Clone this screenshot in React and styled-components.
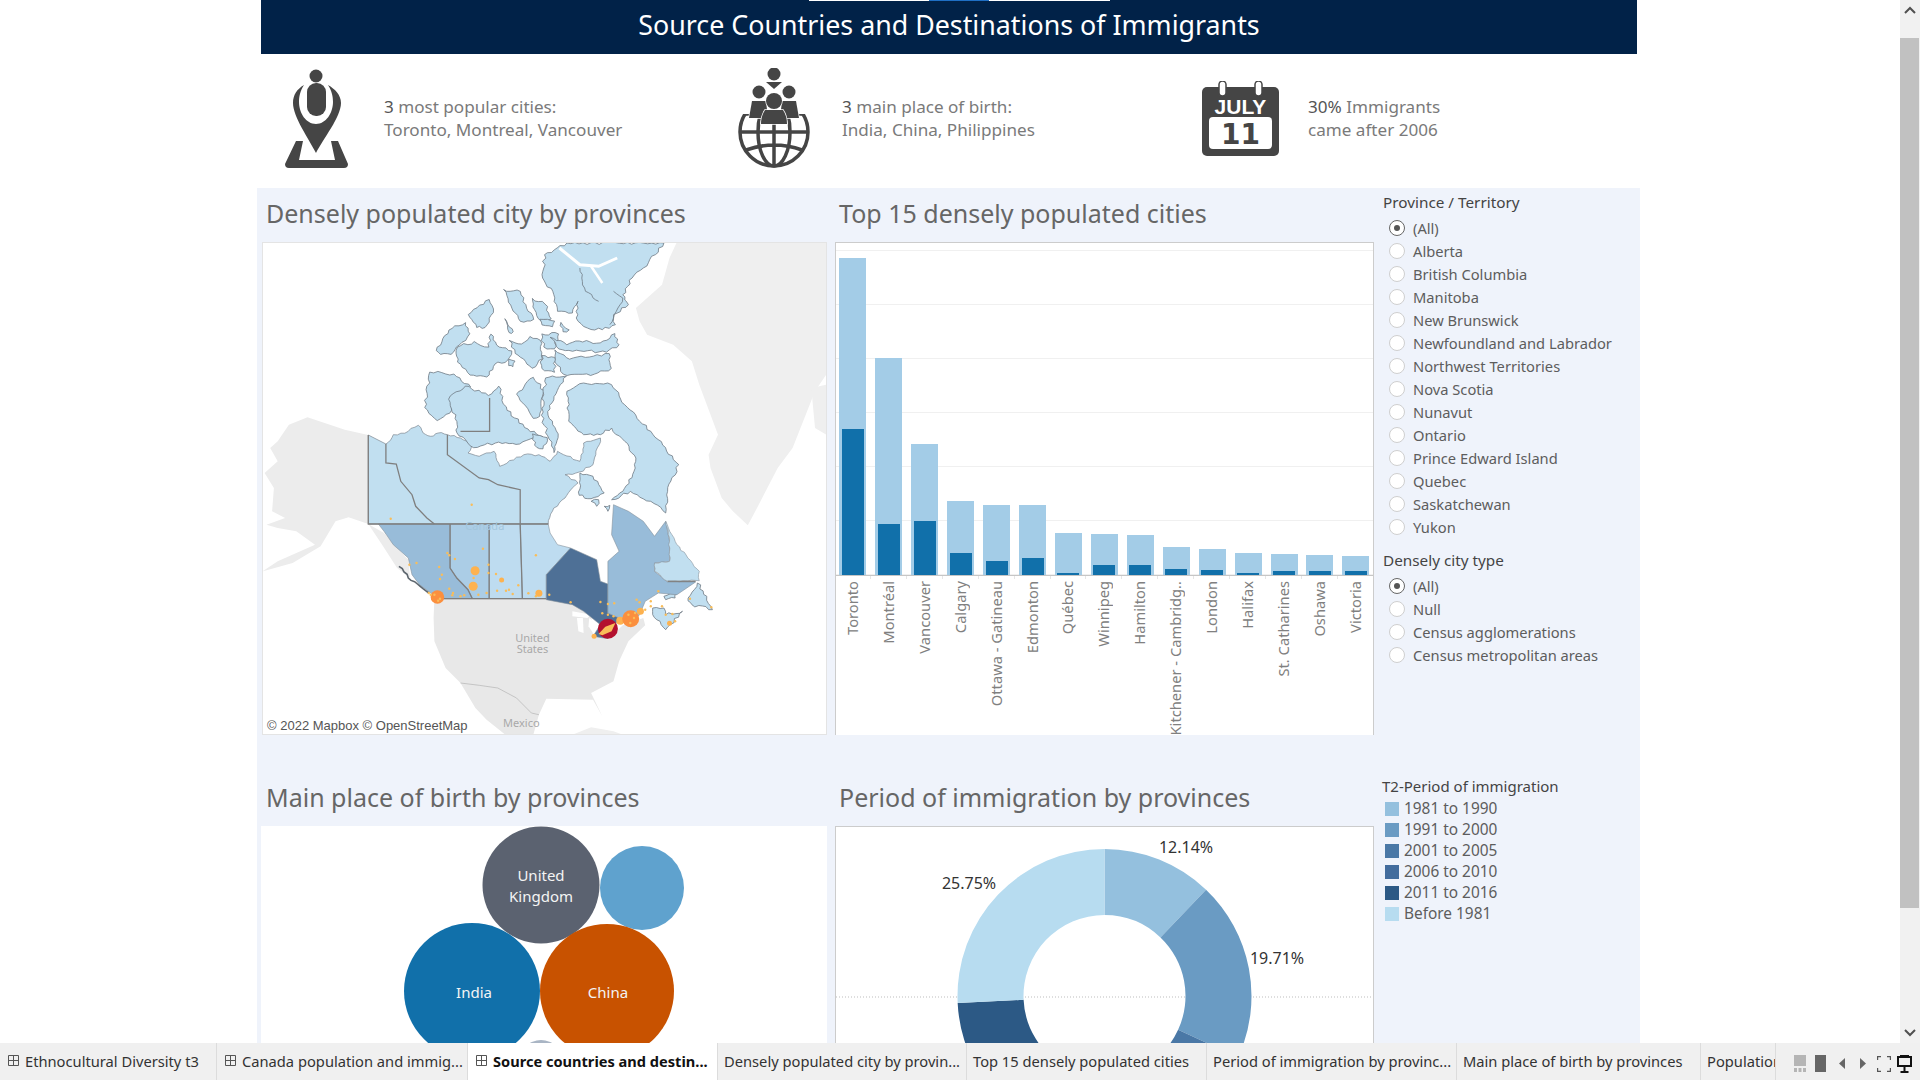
import React from 'react';
import styled, { createGlobalStyle } from 'styled-components';

const FONT = '"Noto Sans", "Open Sans", sans-serif';

const GlobalStyle = createGlobalStyle`
  html, body { margin: 0; padding: 0; background: #fff; overflow: hidden; }
  body { font-family: ${FONT}; }
`;

// map coordinates are traced from a 2.68x / 3x crop of the map card
const mx = (x) => ((x - 18) / 2.68).toFixed(1);
const my = (y) => ((y - 22) / 3).toFixed(1);
const pts = (arr) => arr.map(([x, y]) => `${mx(x)},${my(y)}`).join(' ');

const noise = (k) => {
  const v = Math.sin(k * 12.9898) * 43758.5453;
  return v - Math.floor(v) - 0.5;
};

// breaks straight edges into a jagged coastline
const rough = (arr, amp = 9, closed = true) => {
  const out = [];
  const edges = closed ? arr.length : arr.length - 1;
  for (let i = 0; i < edges; i++) {
    const [x, y] = arr[i];
    const [nx, ny] = arr[(i + 1) % arr.length];
    const len = Math.hypot(nx - x, ny - y);
    const steps = Math.max(1, Math.ceil(len / 11));
    for (let s = 0; s < steps; s++) {
      const t = s / steps;
      const o = s === 0 ? 0 : noise(x * 3 + y + s) * amp;
      out.push([x + (nx - x) * t + (-(ny - y) / len) * o, y + (ny - y) * t + ((nx - x) / len) * o]);
    }
  }
  if (!closed) out.push(arr[arr.length - 1]);
  return out;
};

// widens an island a little around its own centre
const grow = (arr, k = 1.12) => {
  const cx = arr.reduce((s, p) => s + p[0], 0) / arr.length;
  const cy = arr.reduce((s, p) => s + p[1], 0) / arr.length;
  return arr.map(([x, y]) => [cx + (x - cx) * k, cy + (y - cy) * k]);
};

const LAND = [
  { fill: '#ececec', points: [[303, 601], [240, 585], [140, 548], [90, 570], [60, 620], [40, 640], [60, 680], [25, 715], [50, 760], [45, 830], [80, 850], [30, 870], [60, 880], [110, 890], [160, 930], [60, 980], [20, 1010], [100, 985], [175, 935], [215, 860], [250, 848], [303, 868], [345, 895], [375, 935], [410, 975], [415, 1030], [380, 1000], [340, 930], [303, 868]] },
  { fill: '#e8e8e8', points: [[480, 1092], [780, 1092], [845, 1105], [900, 1135], [905, 1200], [945, 1215], [985, 1172], [1040, 1150], [1045, 1172], [1000, 1220], [975, 1280], [960, 1340], [900, 1375], [930, 1445], [905, 1395], [780, 1392], [760, 1440], [745, 1500], [670, 1500], [620, 1455], [590, 1420], [550, 1345], [510, 1300], [480, 1220], [478, 1150]] },
  { fill: '#efefef', points: [[1130, 22], [1530, 22], [1530, 420], [1500, 470], [1440, 640], [1400, 700], [1340, 830], [1320, 872], [1280, 830], [1250, 790], [1220, 700], [1215, 660], [1240, 600], [1190, 450], [1170, 380], [1120, 330], [1050, 300], [1030, 260], [1020, 220], [1090, 150], [1110, 70]] },
  { fill: '#efefef', points: [[1490, 460], [1530, 450], [1530, 600], [1500, 580]] },
  { fill: '#efefef', points: [[850, 1500], [900, 1478], [960, 1490], [985, 1500]] },
];

const LAKES = [
  [[850, 1130], [900, 1140], [890, 1150], [850, 1145]],
  [[862, 1150], [878, 1150], [880, 1195], [866, 1190]],
  [[895, 1150], [920, 1170], [905, 1195], [893, 1175]],
];

const ARCTIC = [
  [[670, 170], [710, 175], [725, 220], [742, 250], [710, 255], [690, 220]],
  [[745, 195], [775, 210], [790, 250], [765, 255], [750, 225]],
  [[575, 240], [625, 200], [635, 235], [615, 275], [595, 275]],
  [[670, 255], [690, 290], [680, 292]],
  [[765, 255], [800, 260], [795, 275], [770, 270]],
  [[820, 265], [840, 285], [825, 290]],
  [[490, 345], [520, 290], [560, 270], [570, 300], [545, 330], [525, 355], [500, 355]],
  [[550, 340], [590, 325], [625, 340], [630, 305], [650, 340], [680, 350], [670, 375], [640, 385], [620, 420], [580, 415], [550, 380]],
  [[685, 320], [715, 330], [735, 310], [760, 320], [765, 370], [740, 395], [720, 370], [700, 355]],
  [[770, 300], [810, 300], [800, 340], [775, 335]],
  [[770, 365], [800, 370], [800, 410], [770, 400]],
  [[680, 375], [695, 380], [690, 395], [680, 392]],
  [[472, 420], [530, 425], [570, 460], [530, 490], [520, 530], [490, 550], [460, 515]],
  [[530, 500], [570, 465], [625, 490], [650, 465], [670, 530], [720, 580], [755, 600], [700, 620], [650, 615], [590, 630], [550, 590], [550, 560]],
  [[705, 480], [745, 435], [770, 470], [760, 540], [745, 545]],
  [[780, 440], [830, 435], [800, 490], [785, 530], [810, 600], [800, 640], [770, 540]],
  [[745, 600], [780, 610], [770, 640], [750, 630]],
  [[800, 310], [840, 330], [870, 320], [920, 325], [955, 300], [965, 330], [935, 350], [845, 345], [815, 335]],
  [[810, 350], [845, 375], [940, 360], [945, 400], [905, 415], [830, 415], [815, 390]],
].map((p) => grow(p));

const ISLANDS = [
  [[775, 60], [835, 25], [1095, 25], [1040, 100], [1010, 130], [985, 180], [1000, 210], [960, 240], [965, 270], [930, 285], [890, 280], [860, 250], [865, 200], [850, 235], [810, 230], [800, 180], [770, 130]],
  ...ARCTIC,
  [[835, 470], [880, 445], [955, 450], [990, 510], [1060, 590], [1135, 690], [1105, 770], [1100, 835], [1060, 800], [1005, 770], [955, 795], [985, 770], [1015, 710], [1020, 670], [990, 620], [955, 580], [925, 600], [880, 600], [840, 560]],
  [[870, 715], [905, 725], [935, 775], [900, 792], [868, 782]],
  [[900, 800], [920, 795], [915, 815]],
  [[935, 815], [950, 812], [945, 830]],
  [[1065, 1120], [1095, 1120], [1100, 1140], [1145, 1130], [1100, 1185], [1085, 1160], [1065, 1140]],
  [[1185, 1045], [1210, 1085], [1225, 1125], [1170, 1110], [1160, 1090]],
  [[1095, 1085], [1130, 1078], [1125, 1090], [1100, 1095]],
];

const NORTH_COAST = [[350, 628], [370, 600], [410, 590], [437, 572], [450, 595], [470, 605], [490, 595], [515, 600], [550, 610], [580, 630], [570, 655], [600, 665], [640, 650], [655, 695], [720, 660], [760, 660], [790, 680], [810, 650], [870, 680], [880, 625], [925, 610], [905, 690], [868, 712], [830, 720], [865, 745], [830, 790], [800, 820], [785, 868]];
const MAINLAND = [[303, 868], [303, 601], ...rough(NORTH_COAST, 7, false)];

const REGIONS = [
  { fill: '#98bcd9', points: [[330, 868], [522, 868], [522, 1000], [540, 1030], [570, 1065], [582, 1092], [500, 1092], [470, 1075], [440, 1050], [420, 1020], [410, 970], [370, 930], [345, 890]] },
  { fill: '#abcde6', points: [[522, 868], [627, 868], [627, 1092], [582, 1092], [570, 1065], [540, 1030], [522, 1000]] },
  { fill: '#bedcf0', points: [[627, 868], [710, 868], [716, 1092], [627, 1092]] },
  { fill: '#bedcf0', points: [[710, 868], [785, 868], [790, 895], [810, 930], [845, 940], [780, 1020], [780, 1092], [716, 1092]] },
  { fill: '#4e7096', points: [[845, 940], [915, 975], [925, 1040], [945, 1048], [945, 1135], [975, 1150], [960, 1180], [945, 1212], [905, 1205], [925, 1170], [880, 1130], [850, 1110], [780, 1095], [780, 1020]] },
  { fill: '#98bcd9', points: [[960, 810], [1000, 830], [1040, 860], [1070, 905], [1100, 860], [1110, 920], [1110, 980], [1070, 985], [1070, 1010], [1105, 1042], [1180, 1042], [1130, 1080], [1080, 1075], [1045, 1100], [1030, 1140], [1000, 1175], [975, 1150], [945, 1135], [945, 980], [975, 950], [955, 900]] },
  { fill: '#c1dff0', points: rough([[1100, 860], [1130, 930], [1190, 1010], [1190, 1038], [1105, 1040], [1070, 1010], [1070, 985], [1110, 980], [1110, 920]], 5) },
];

const BORDERS = [
  [[350, 628], [350, 685], [378, 688], [390, 740], [420, 780], [430, 815], [460, 850], [480, 868]],
  [[515, 600], [515, 660], [600, 730], [625, 735], [650, 750], [710, 765], [710, 868], [716, 1092]],
  [[303, 601], [303, 868], [785, 868]],
  [[522, 868], [522, 1000], [540, 1030], [570, 1065], [582, 1092]],
  [[627, 868], [627, 1092]],
  [[500, 1092], [780, 1092]],
  [[628, 490], [628, 590], [550, 590]],
  [[1105, 1040], [1180, 1040]],
];

const SMALL_DOTS = [[580, 810], [363, 852], [515, 955], [520, 962], [535, 973], [610, 942], [752, 962], [625, 990], [493, 997], [432, 985], [413, 990], [500, 1020], [495, 1033], [645, 1018], [625, 1015], [585, 1030], [520, 1062], [530, 1075], [528, 1082], [560, 1082], [598, 1080], [620, 1075], [648, 1068], [672, 1068], [680, 1065], [690, 1078], [705, 1052], [732, 1076], [788, 1080], [752, 1085], [845, 1103], [925, 1102], [945, 1108], [962, 1106], [930, 1136], [945, 1140], [960, 1145], [1022, 1095], [1030, 1103], [1060, 1100], [1080, 1070], [1100, 1140], [1118, 1138], [1165, 1092], [1222, 1118], [1090, 1115], [1125, 1160], [1060, 1115], [1045, 1125], [470, 1080], [465, 1075], [550, 1085], [480, 1080], [495, 1092], [490, 1098], [1000, 1140], [1015, 1150], [1005, 1165], [1018, 1135]];

const BIG_DOTS = [
  [584, 1055, 4.5], [589, 1008, 4.5], [760, 1076, 3.5], [1032, 1130, 3.5], [978, 1158, 4], [908, 1205, 2.5], [660, 1036, 2.5], [1110, 1166, 2.5],
];

const BARS = [
  { name: 'Toronto', total: 317, core: 146 },
  { name: 'Montréal', total: 217, core: 51 },
  { name: 'Vancouver', total: 131, core: 54 },
  { name: 'Calgary', total: 74, core: 22 },
  { name: 'Ottawa - Gatineau', total: 70, core: 14 },
  { name: 'Edmonton', total: 70, core: 17 },
  { name: 'Québec', total: 42, core: 2 },
  { name: 'Winnipeg', total: 41, core: 10 },
  { name: 'Hamilton', total: 40, core: 10 },
  { name: 'Kitchener - Cambridg..', total: 28, core: 6 },
  { name: 'London', total: 26, core: 5 },
  { name: 'Halifax', total: 22, core: 2 },
  { name: 'St. Catharines', total: 21, core: 4 },
  { name: 'Oshawa', total: 20, core: 4 },
  { name: 'Victoria', total: 19, core: 4 },
];

const PROVINCES = ['(All)', 'Alberta', 'British Columbia', 'Manitoba', 'New Brunswick', 'Newfoundland and Labrador', 'Northwest Territories', 'Nova Scotia', 'Nunavut', 'Ontario', 'Prince Edward Island', 'Quebec', 'Saskatchewan', 'Yukon'];
const CITY_TYPES = ['(All)', 'Null', 'Census agglomerations', 'Census metropolitan areas'];

const PERIODS = [
  { label: '1981 to 1990', color: '#94c0de', from: 0, to: 12.14 },
  { label: '1991 to 2000', color: '#6a9bc3', from: 12.14, to: 31.85 },
  { label: '2001 to 2005', color: '#4a78a6', from: 31.85, to: 45 },
  { label: '2006 to 2010', color: '#426c9d', from: 45, to: 58 },
  { label: '2011 to 2016', color: '#2c5985', from: 58, to: 74.25 },
  { label: 'Before 1981', color: '#b7dcf0', from: 74.25, to: 100 },
];

const TABS = [
  { label: 'Ethnocultural Diversity t3', width: 217, board: true },
  { label: 'Canada population and immig...', width: 251, board: true },
  { label: 'Source countries and destin...', width: 250, board: true, active: true },
  { label: 'Densely populated city by provin...', width: 249 },
  { label: 'Top 15 densely populated cities', width: 240 },
  { label: 'Period of immigration by provinc...', width: 250 },
  { label: 'Main place of birth by provinces', width: 244 },
  { label: 'Population by provinces', width: 75 },
];

const donutSlice = (cx, cy, outer, inner, from, to) => {
  const at = (pct, r) => {
    const a = (pct / 100) * Math.PI * 2;
    return `${(cx + r * Math.sin(a)).toFixed(2)} ${(cy - r * Math.cos(a)).toFixed(2)}`;
  };
  const large = to - from > 50 ? 1 : 0;
  return `M${at(from, outer)} A${outer} ${outer} 0 ${large} 1 ${at(to, outer)} L${at(to, inner)} A${inner} ${inner} 0 ${large} 0 ${at(from, inner)} Z`;
};

const PinIcon = () => (
  <svg width="63" height="99" viewBox="0 0 63 99" fill="#454545">
    <circle cx="31" cy="7" r="6.5" />
    <rect x="22" y="14" width="19" height="33" rx="9" />
    <path fillRule="evenodd" d="M19 16C12 20 8 26 8 34C8 48 24 70 31 84C38 70 56 48 56 34C56 26 50 20 43 16C47 22 48 28 48 33C48 44 41 55 31 55C21 55 14 44 14 33C14 28 15 22 19 16Z" />
    <path d="M11 72H18L14 91H50L46 72H53L63 95Q63 99 59 99H4Q0 99 0 95Z" />
  </svg>
);

const GlobeIcon = () => (
  <svg width="72" height="100" viewBox="0 0 72 100">
    <defs>
      <clipPath id="globe-clip">
        <rect x="0" y="46" width="72" height="54" />
      </clipPath>
    </defs>
    <g clipPath="url(#globe-clip)" fill="none" stroke="#454545" strokeWidth="3.5">
      <circle cx="36" cy="64" r="34" />
      <ellipse cx="36" cy="64" rx="16" ry="34" />
      <path d="M36 30V98M3 64H69M8 46H64M8 82Q36 72 64 82" />
    </g>
    <g fill="#454545" stroke="#fff" strokeWidth="1.5" paintOrder="stroke">
      <circle cx="36" cy="6" r="6.5" />
      <path d="M28 14H44L36 21Z" />
      <circle cx="21" cy="24" r="6.5" />
      <path d="M14 33H28L30 50L11 50Z" />
      <circle cx="51" cy="24" r="6.5" />
      <path d="M44 33H58L61 50L42 50Z" />
      <circle cx="36" cy="33" r="8" />
      <path d="M27 42H45Q49 48 49 56H23Q23 48 27 42Z" />
    </g>
  </svg>
);

const CalendarIcon = () => (
  <svg width="77" height="75" viewBox="0 0 77 75">
    <rect x="0" y="6" width="77" height="69" rx="5" fill="#454545" />
    <rect x="17" y="0" width="7" height="15" rx="3.5" fill="#fff" stroke="#454545" strokeWidth="1.5" />
    <rect x="53" y="0" width="7" height="15" rx="3.5" fill="#fff" stroke="#454545" strokeWidth="1.5" />
    <text x="38.5" y="33" textAnchor="middle" fontFamily="'Liberation Sans', sans-serif" fontWeight="700" fontSize="21" fill="#fff">JULY</text>
    <rect x="7" y="36" width="63" height="32" rx="4" fill="#fff" />
    <text x="38.5" y="63" textAnchor="middle" fontFamily="'DejaVu Sans', sans-serif" fontWeight="700" fontSize="28" fill="#454545">11</text>
  </svg>
);

const CanadaMap = () => (
  <MapSvg viewBox="0 0 565 493">
    {LAND.map((l, i) => <polygon key={i} points={pts(l.points)} fill={l.fill} />)}
    {LAKES.map((p, i) => <polygon key={i} points={pts(p)} fill="#fff" />)}
    <polyline points={pts([[550, 1345], [600, 1352], [650, 1360], [700, 1390], [740, 1435], [760, 1440]])} fill="none" stroke="#bbb" strokeWidth="0.8" />
    <polygon points={pts(MAINLAND)} fill="#c1dff0" stroke="#7d8790" strokeWidth="0.7" />
    {ISLANDS.map((p, i) => <polygon key={i} points={pts(rough(p))} fill="#c1dff0" stroke="#6f7a84" strokeWidth="0.8" />)}
    <polyline points={pts([[815, 40], [870, 90], [920, 95], [970, 70]])} fill="none" stroke="#fff" strokeWidth="3" />
    <polyline points={pts([[900, 95], [930, 145]])} fill="none" stroke="#fff" strokeWidth="2.5" />
    <polyline points={pts(rough([[870, 100], [885, 170], [920, 200]], 8, false))} fill="none" stroke="#6f7a84" strokeWidth="0.8" />
    <polyline points={pts(rough([[960, 170], [985, 190], [950, 270]], 8, false))} fill="none" stroke="#6f7a84" strokeWidth="0.8" />
    {REGIONS.map((r, i) => <polygon key={i} points={pts(r.points)} fill={r.fill} stroke="#87929c" strokeWidth="0.6" />)}
    {BORDERS.map((p, i) => <polyline key={i} points={pts(p)} fill="none" stroke="#7f7f7f" strokeWidth="1.3" />)}
    <polyline points={pts(rough([[385, 995], [410, 1030], [465, 1075]], 12, false))} fill="none" stroke="#5d666e" strokeWidth="1.6" />
    <text x={mx(615)} y={my(886)} textAnchor="middle" fontSize="11" fill="#a3c6dd">Canada</text>
    <MapLabel x={mx(743)} y={my(1223)} textAnchor="middle">United</MapLabel>
    <MapLabel x={mx(743)} y={my(1256)} textAnchor="middle">States</MapLabel>
    <MapLabel x={mx(713)} y={my(1476)} textAnchor="middle">Mexico</MapLabel>
    {BIG_DOTS.map(([x, y, r], i) => <circle key={i} cx={mx(x)} cy={my(y)} r={r} fill="#fdb24f" />)}
    <circle cx={mx(488)} cy={my(1087)} r="6.8" fill="#fb8f3e" />
    <circle cx={mx(1006)} cy={my(1152)} r="8.5" fill="#fb8f3e" />
    <circle cx={mx(945)} cy={my(1182)} r="10" fill="#b3112f" />
    <polygon points={pts([[920, 1198], [938, 1176], [965, 1165], [955, 1190], [930, 1202]])} fill="#f9bd59" />
    {SMALL_DOTS.map(([x, y], i) => <circle key={i} cx={mx(x)} cy={my(y)} r="1.2" fill="#f9bd59" />)}
  </MapSvg>
);

const BubbleChart = () => (
  <ChartSvg width="566" height="240" viewBox="0 0 566 240">
    <circle cx="280" cy="59" r="58.5" fill="#5b6270" />
    <circle cx="381" cy="62" r="42" fill="#5fa2ce" />
    <circle cx="211" cy="165" r="68" fill="#1170aa" />
    <circle cx="346" cy="165" r="67" fill="#c85200" />
    <circle cx="280" cy="236" r="22" fill="#a9b5c4" />
    <BubbleLabel x="280" y="55">United</BubbleLabel>
    <BubbleLabel x="280" y="76">Kingdom</BubbleLabel>
    <BubbleLabel x="213" y="172">India</BubbleLabel>
    <BubbleLabel x="347" y="172">China</BubbleLabel>
  </ChartSvg>
);

const DonutChart = () => (
  <ChartSvg width="538" height="240" viewBox="0 0 538 240">
    <line x1="0" y1="170" x2="538" y2="170" stroke="#bdbdbd" strokeDasharray="1 2" />
    {PERIODS.map((p) => (
      <path key={p.label} d={donutSlice(268.5, 169, 147, 81, p.from, p.to)} fill={p.color} />
    ))}
    <DonutLabel x="350" y="26">12.14%</DonutLabel>
    <DonutLabel x="441" y="137">19.71%</DonutLabel>
    <DonutLabel x="133" y="62">25.75%</DonutLabel>
  </ChartSvg>
);

const RadioList = ({ title, options }) => (
  <FilterGroup>
    <FilterTitle>{title}</FilterTitle>
    {options.map((option, i) => (
      <RadioRow key={option}>
        <Radio $checked={i === 0} />
        {option}
      </RadioRow>
    ))}
  </FilterGroup>
);

const SheetGlyph = () => (
  <TabGlyph width="11" height="11" viewBox="0 0 11 11" fill="none" stroke="#555">
    <path d="M.5 .5H10.5V10.5H.5ZM5.5 .5V10.5M.5 5.5H10.5" />
  </TabGlyph>
);

export default function App() {
  return (
    <Root>
      <GlobalStyle />
      <Viewport>
        <Page>
          <Header>
            <HeaderStrip />
            Source Countries and Destinations of Immigrants
          </Header>
          <KpiRow>
            <Kpi $icon={99}>
              <PinIcon />
              <KpiText><b>3</b> most popular cities:<br />Toronto, Montreal, Vancouver</KpiText>
            </Kpi>
            <Kpi $icon={104}>
              <GlobeIcon />
              <KpiText><b>3</b> main place of birth:<br />India, China, Philippines</KpiText>
            </Kpi>
            <Kpi $icon={106}>
              <CalendarIcon />
              <KpiText><b>30%</b> Immigrants<br />came after 2006</KpiText>
            </Kpi>
          </KpiRow>
          <Panel>
            <Section>
              <SheetTitle>Densely populated city by provinces</SheetTitle>
              <SheetTitle>Top 15 densely populated cities</SheetTitle>
              <FilterColumn>
                <RadioList title="Province / Territory" options={PROVINCES} />
                <RadioList title="Densely city type" options={CITY_TYPES} />
              </FilterColumn>
              <MapCard>
                <CanadaMap />
                <Attribution>© 2022 Mapbox © OpenStreetMap</Attribution>
              </MapCard>
              <BarCard>
                <Plot>
                  {BARS.map((bar) => (
                    <BarSlot key={bar.name}>
                      <BarTotal $h={bar.total}>
                        <BarCore $h={bar.core} />
                      </BarTotal>
                    </BarSlot>
                  ))}
                </Plot>
                <AxisLabels>
                  {BARS.map((bar) => (
                    <AxisCell key={bar.name}>
                      <AxisText>{bar.name}</AxisText>
                    </AxisCell>
                  ))}
                </AxisLabels>
              </BarCard>
            </Section>
            <LowerSection>
              <SheetTitle>Main place of birth by provinces</SheetTitle>
              <SheetTitle>Period of immigration by provinces</SheetTitle>
              <Legend>
                <LegendTitle>T2-Period of immigration</LegendTitle>
                {PERIODS.map((p) => (
                  <LegendRow key={p.label}>
                    <Swatch $color={p.color} />
                    {p.label}
                  </LegendRow>
                ))}
              </Legend>
              <BubbleCard><BubbleChart /></BubbleCard>
              <DonutCard><DonutChart /></DonutCard>
            </LowerSection>
          </Panel>
        </Page>
        <Scrollbar>
          <ScrollButton>
            <svg width="12" height="8" viewBox="0 0 12 8" fill="none" stroke="#505050" strokeWidth="2"><path d="M1 7L6 2L11 7" /></svg>
          </ScrollButton>
          <ScrollThumb />
          <ScrollButton $end>
            <svg width="12" height="8" viewBox="0 0 12 8" fill="none" stroke="#505050" strokeWidth="2"><path d="M1 1L6 6L11 1" /></svg>
          </ScrollButton>
        </Scrollbar>
      </Viewport>
      <TabBar>
        {TABS.map((tab) => (
          <Tab key={tab.label} $width={tab.width} $active={tab.active} $board={tab.board}>
            {tab.board && <SheetGlyph />}
            <span>{tab.label}</span>
          </Tab>
        ))}
        <TabControls>
          <ControlSlot><svg width="12" height="17" viewBox="0 0 12 17" fill="#b5b5b5"><path d="M0 0H12V11H0ZM0 13H3V17H0ZM4.500 13H7.500V17H4.500ZM9 13H12V17H9Z" /></svg></ControlSlot>
          <ControlSlot><svg width="11" height="17" viewBox="0 0 11 17" fill="#666"><path d="M0 0H11V17H0Z" /></svg></ControlSlot>
          <ControlSlot><svg width="6" height="11" viewBox="0 0 6 11" fill="#666"><path d="M6 0V11L0 5.500Z" /></svg></ControlSlot>
          <ControlSlot><svg width="6" height="11" viewBox="0 0 6 11" fill="#666"><path d="M0 0V11L6 5.500Z" /></svg></ControlSlot>
          <ControlSlot><svg width="14" height="16" viewBox="0 0 14 16" fill="none" stroke="#555" strokeWidth="1.2"><path d="M.6 4V.6H4M10 .6H13.400V4M13.400 12V15.400H10M4 15.400H.6V12" /></svg></ControlSlot>
          <ControlSlot><svg width="15" height="18" viewBox="0 0 15 18" fill="none" stroke="#111" strokeWidth="2"><path d="M1 2H14V11H1ZM7.500 11V16M3.500 17H11.500" /><path d="M3 1H12" /></svg></ControlSlot>
        </TabControls>
      </TabBar>
    </Root>
  );
}

// Styled components

const Root = styled.div`
  display: flex;
  flex-direction: column;
  width: 1920px;
  height: 1080px;
  overflow: hidden;
  background: #fff;
`;

const Viewport = styled.div`
  display: flex;
  flex: 1;
  min-height: 0;
  overflow: hidden;
`;

const Page = styled.main`
  width: 1900px;
  padding-left: 257px;
  box-sizing: border-box;
  overflow: hidden;
`;

const Header = styled.header`
  position: relative;
  display: flex;
  align-items: center;
  justify-content: center;
  width: 1376px;
  height: 48px;
  padding-bottom: 6px;
  margin-left: 4px;
  background: #012248;
  color: #fff;
  font-size: 26.8px;
`;

const HeaderStrip = styled.span`
  position: absolute;
  top: 0;
  left: 548px;
  width: 301px;
  height: 1px;
  background: linear-gradient(to right, #fff 120px, #1f6fc4 120px, #1f6fc4 180px, #fff 180px);
`;

const KpiRow = styled.section`
  display: grid;
  grid-template-columns: 453px 464px 1fr;
  align-items: center;
  width: 1376px;
  height: 134px;
  padding: 0 0 6px 24px;
  margin-left: 4px;
  box-sizing: border-box;
`;

const Kpi = styled.div`
  display: grid;
  grid-template-columns: ${(p) => p.$icon}px 1fr;
  align-items: center;
  svg { display: block; }
`;

const KpiText = styled.p`
  margin: 0;
  font-size: 17.1px;
  line-height: 23px;
  color: #7a7a7a;
  b { font-weight: 400; color: #555; }
`;

const Panel = styled.div`
  width: 1383px;
  padding-left: 5px;
  box-sizing: border-box;
  background: #eff3fb;
`;

const Section = styled.section`
  display: grid;
  grid-template-columns: 565px 539px 1fr;
  grid-template-rows: 54px 493px;
  column-gap: 8px;
`;

const LowerSection = styled(Section)`
  grid-template-rows: 54px 240px;
  margin-top: 37px;
`;

const SheetTitle = styled.h2`
  margin: 0;
  padding-left: 4px;
  font-size: 25px;
  font-weight: 400;
  line-height: 51px;
  color: #666;
  white-space: nowrap;
`;

const FilterColumn = styled.aside`
  grid-column: 3;
  grid-row: 1 / span 2;
  padding: 3px 0 0 1px;
`;

const FilterGroup = styled.div`
  margin-bottom: 11px;
`;

const FilterTitle = styled.div`
  height: 25px;
  font-size: 15.3px;
  line-height: 23px;
  color: #444;
`;

const RadioRow = styled.label`
  display: flex;
  align-items: center;
  gap: 8px;
  height: 23px;
  padding-left: 6px;
  font-size: 14.7px;
  color: #5d5d5d;
  white-space: nowrap;
`;

const Radio = styled.span`
  display: flex;
  align-items: center;
  justify-content: center;
  width: 16px;
  height: 16px;
  box-sizing: border-box;
  border: 1px solid ${(p) => (p.$checked ? '#666' : '#cfcfcf')};
  border-radius: 50%;
  background: #fff;
  &::after {
    content: '';
    display: ${(p) => (p.$checked ? 'block' : 'none')};
    width: 6px;
    height: 6px;
    border-radius: 50%;
    background: #555;
  }
`;

const MapCard = styled.div`
  position: relative;
  grid-column: 1;
  border: 1px solid #e4e4e4;
  box-sizing: border-box;
  background: #fff;
  overflow: hidden;
`;

const MapSvg = styled.svg`
  display: block;
  width: 565px;
  height: 493px;
  margin: -1px;
`;

const MapLabel = styled.text`
  font-size: 11px;
  fill: #a8a8a8;
`;

const Attribution = styled.span`
  position: absolute;
  left: 1px;
  bottom: 0;
  padding: 0 3px;
  background: rgba(255, 255, 255, 0.7);
  font-family: 'Liberation Sans', sans-serif;
  font-size: 13px;
  line-height: 17px;
  color: #555;
`;

const BarCard = styled.div`
  grid-column: 2;
  border: 1px solid #ccc;
  border-bottom: none;
  box-sizing: border-box;
  background: #fff;
  overflow: hidden;
`;

const Plot = styled.div`
  display: flex;
  align-items: flex-end;
  height: 332px;
  border-bottom: 1px solid #c6c6c6;
  background-image: linear-gradient(#f0f0f0 1px, transparent 1px);
  background-size: 100% 54px;
  background-position: 0 7px;
`;

const BarSlot = styled.div`
  display: flex;
  justify-content: center;
  width: 35.93px;
  flex: none;
  &:first-child { margin-left: -1px; }
`;

const BarTotal = styled.div`
  display: flex;
  align-items: flex-end;
  justify-content: center;
  width: 27px;
  height: ${(p) => p.$h}px;
  background: #a3cce7;
`;

const BarCore = styled.div`
  width: 22px;
  height: ${(p) => p.$h}px;
  background: #1170aa;
`;

const AxisLabels = styled.div`
  display: flex;
  height: 160px;
`;

const AxisCell = styled.div`
  display: flex;
  justify-content: center;
  align-items: flex-start;
  width: 35.93px;
  flex: none;
  padding-top: 5px;
  box-sizing: border-box;
  background: linear-gradient(#e6e6e6, #e6e6e6) left top / 1px 3px no-repeat;
  &:first-child { margin-left: -2px; }
`;

const AxisText = styled.span`
  writing-mode: vertical-rl;
  transform: rotate(180deg);
  font-size: 14.7px;
  line-height: 18px;
  color: #808080;
  white-space: nowrap;
`;

const Legend = styled.aside`
  grid-column: 3;
  grid-row: 1 / span 2;
  padding: 4px 0 0 0;
`;

const LegendTitle = styled.div`
  height: 22px;
  font-size: 15px;
  line-height: 21px;
  color: #444;
`;

const LegendRow = styled.div`
  display: flex;
  align-items: center;
  gap: 5px;
  height: 21px;
  padding-left: 3px;
  font-size: 15.4px;
  color: #5d5d5d;
`;

const Swatch = styled.span`
  width: 14px;
  height: 14px;
  background: ${(p) => p.$color};
`;

const BubbleCard = styled.div`
  grid-column: 1;
  margin-left: -1px;
  background: #fff;
`;

const DonutCard = styled.div`
  grid-column: 2;
  border: 1px solid #ccc;
  border-bottom: none;
  box-sizing: border-box;
  background: #fff;
  overflow: hidden;
`;

const ChartSvg = styled.svg`
  display: block;
`;

const BubbleLabel = styled.text`
  font-size: 15px;
  fill: #f4f4f4;
  text-anchor: middle;
`;

const DonutLabel = styled.text`
  font-size: 16px;
  fill: #333;
  text-anchor: middle;
`;

const Scrollbar = styled.div`
  display: flex;
  flex-direction: column;
  width: 20px;
  background: #f1f1f1;
`;

const ScrollButton = styled.div`
  display: flex;
  align-items: center;
  justify-content: center;
  height: 20px;
  margin-top: ${(p) => (p.$end ? 'auto' : '0')};
`;

const ScrollThumb = styled.div`
  width: 19px;
  height: 870px;
  margin-top: 18px;
  background: #c1c1c1;
`;

const TabBar = styled.nav`
  display: flex;
  align-items: stretch;
  height: 37px;
  background: #f0f0f0;
  flex: none;
`;

const Tab = styled.div`
  display: flex;
  align-items: center;
  gap: 6px;
  width: ${(p) => p.$width}px;
  flex: none;
  box-sizing: border-box;
  padding: 0 0 2px ${(p) => (p.$board ? '8px' : '6px')};
  border-right: 1px solid #dcdcdc;
  background: ${(p) => (p.$active ? '#fff' : 'transparent')};
  font-size: ${(p) => (p.$active ? '14.6px' : '14.7px')};
  font-weight: ${(p) => (p.$active ? 700 : 400)};
  color: ${(p) => (p.$active ? '#111' : '#333')};
  overflow: hidden;
  white-space: nowrap;
`;

const TabGlyph = styled.svg`
  flex: none;
`;

const TabControls = styled.div`
  display: flex;
  align-items: center;
  padding-left: 13px;
  margin-top: 4px;
`;

const ControlSlot = styled.div`
  display: flex;
  justify-content: center;
  width: 21px;
`;
